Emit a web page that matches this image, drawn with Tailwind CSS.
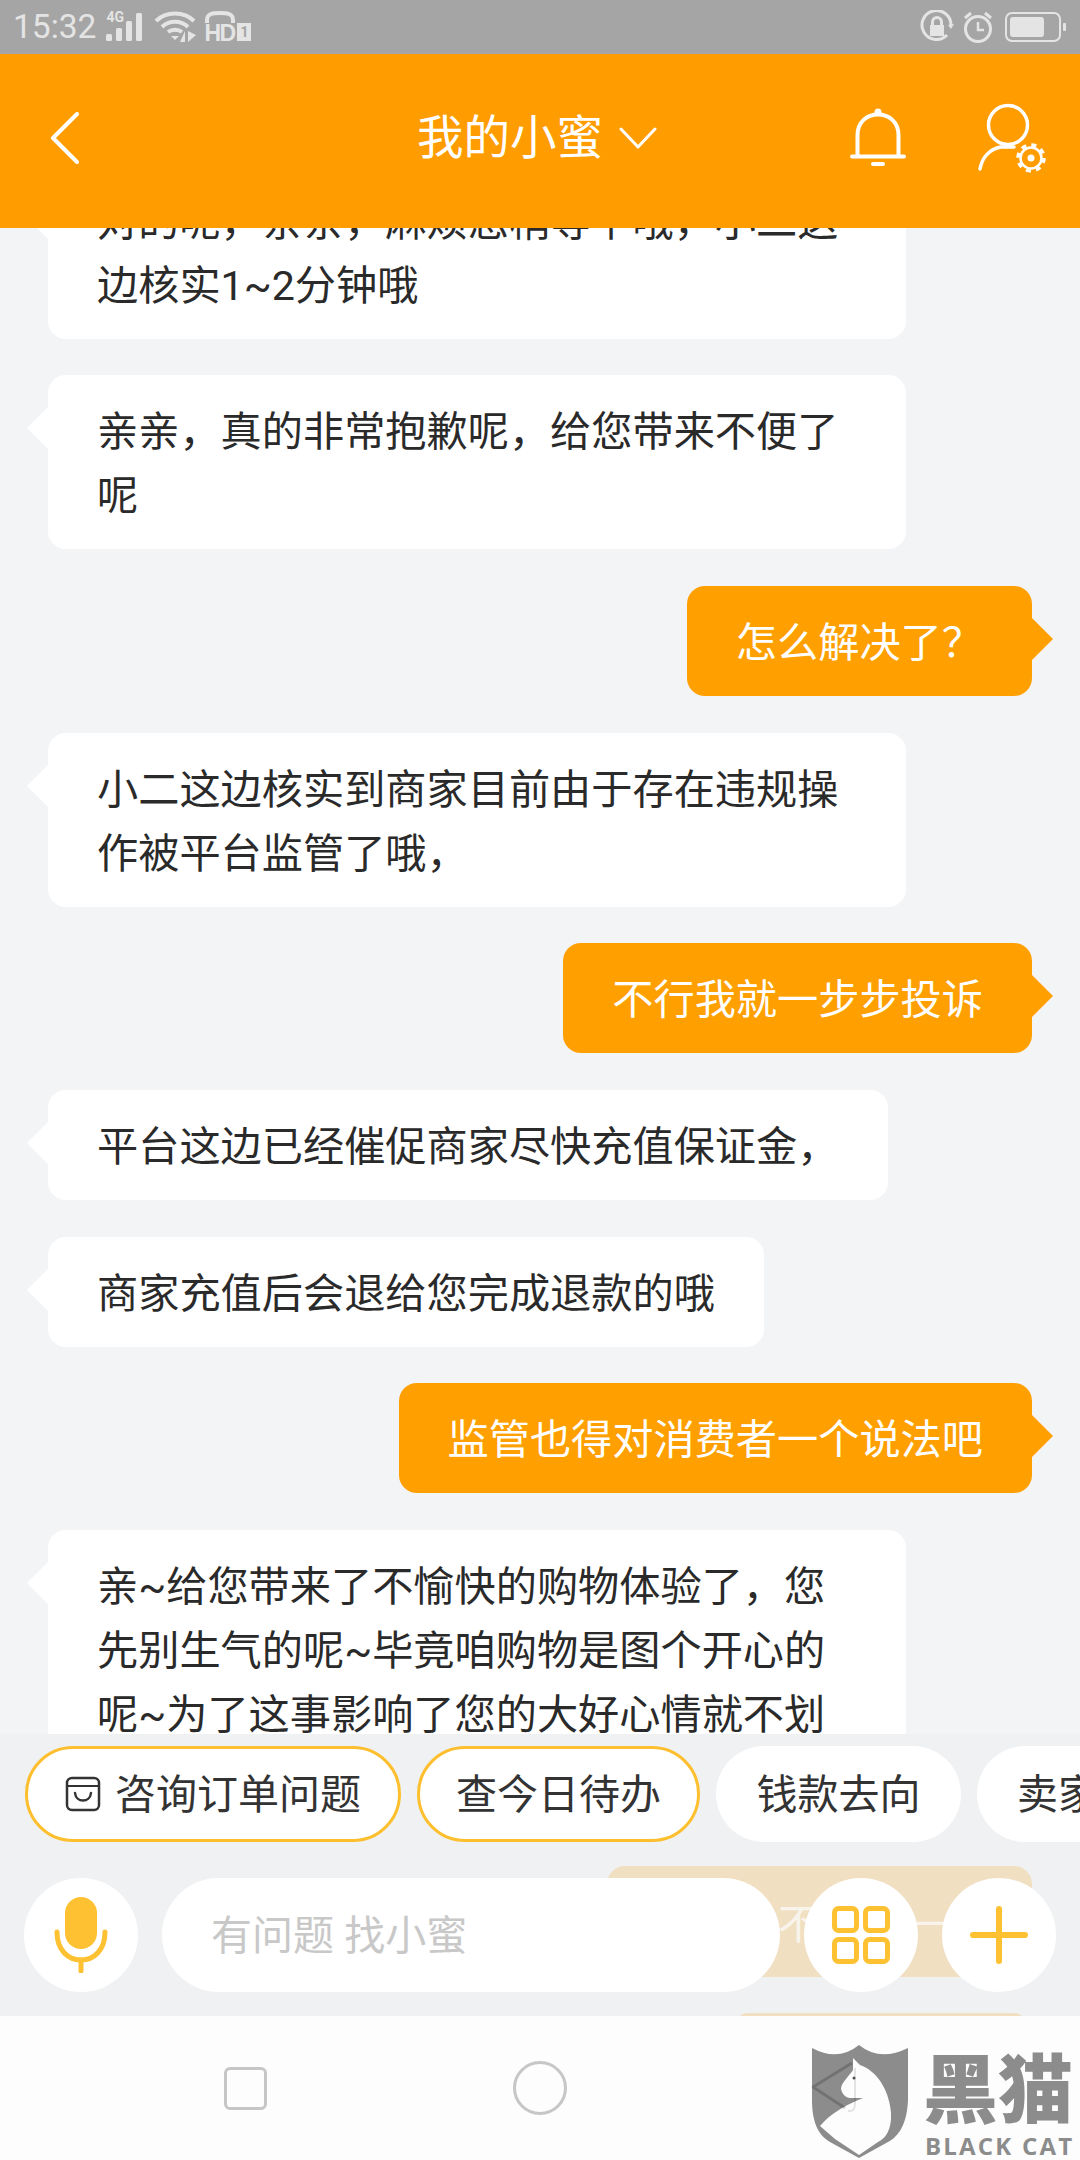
<!DOCTYPE html>
<html lang="zh-CN">
<head>
    <meta charset="UTF-8">
    <title>我的小蜜</title>
    <script src="https://cdn.jsdelivr.net/npm/@tailwindcss/browser@4"></script>
</head>
<body class="bg-[#f3f4f6]">
<div class="relative flex flex-col w-[1080px] h-[2160px] overflow-hidden bg-[#f3f4f6] [font-family:Roboto,'Noto_Sans_CJK_SC',sans-serif]">

    <!-- status bar -->
    <div class="relative z-20 flex items-center h-[54px] shrink-0 bg-[#a5a5a5] text-[#e4e4e4]">
        <span class="ml-[13px] text-[33.5px] leading-none">15:32</span>
        <div class="relative ml-[10px] w-[38px] h-[30px]">
            <span class="absolute left-0 top-[-2px] text-[14px] leading-none font-bold">4G</span>
            <svg class="absolute left-0 top-0" width="38" height="30" viewBox="0 0 38 30" fill="#e4e4e4">
                <rect x="0" y="22" width="6" height="7" rx="1.5"/>
                <rect x="10" y="16" width="6" height="13" rx="1.5"/>
                <rect x="20" y="9" width="6" height="20" rx="1.5"/>
                <rect x="30" y="1" width="6" height="28" rx="1.5"/>
            </svg>
        </div>
        <svg class="ml-[10px]" width="44" height="32" viewBox="0 0 44 32" fill="none" stroke="#e4e4e4" stroke-width="4">
            <path d="M2 10 C12 0 30 0 40 10"/>
            <path d="M8 16 C15 9 27 9 34 16"/>
            <path d="M14 21 C18 18 24 18 28 21"/>
            <path d="M17 25 L21 29 L25 25 Z" fill="#e4e4e4" stroke="none"/>
            <path d="M31 31 V20 L26 31 Z M34 20 V31 L42 24 Z" fill="#e4e4e4" stroke="none"/>
        </svg>
        <div class="relative ml-[6px] w-[48px] h-[32px]">
            <svg class="absolute left-0 top-0" width="32" height="14" viewBox="0 0 32 14" fill="none" stroke="#e4e4e4" stroke-width="4">
                <path d="M3 12 V9 C3 2 10 2 16 2 C22 2 29 2 29 9 V12"/>
            </svg>
            <span class="absolute left-0 top-[11px] text-[23px] leading-none font-bold [font-family:'Liberation_Sans',sans-serif] tracking-[-1.5px]">HD</span>
            <span class="absolute left-[33px] top-[12px] flex items-center justify-center w-[14px] h-[18px] bg-[#e4e4e4] text-[#a5a5a5] text-[14px] leading-none font-bold">1</span>
        </div>
        <svg class="ml-[668px]" width="34" height="34" viewBox="0 0 34 34" fill="none" stroke="#e4e4e4" stroke-width="3">
            <path d="M27 25 A14.5 14.5 0 1 1 31 15"/>
            <path d="M28 15 L31 19 L34 14 Z" fill="#e4e4e4" stroke="none"/>
            <rect x="10" y="15" width="14" height="11" fill="#e4e4e4" stroke="none"/>
            <path d="M12.5 15 V12 C12.5 6 21.5 6 21.5 12 V15"/>
        </svg>
        <svg class="ml-[8px]" width="32" height="34" viewBox="0 0 32 34" fill="none" stroke="#e4e4e4" stroke-width="3">
            <circle cx="16" cy="19" r="12.5"/>
            <path d="M16 12 V20 H22" stroke-width="2.5"/>
            <path d="M3 8 L9 3 M29 8 L23 3"/>
        </svg>
        <div class="ml-[11px] w-[56px] h-[30px] border-2 border-[#e4e4e4] rounded-[7px] p-[3px]">
            <div class="w-[34px] h-full bg-[#e4e4e4] rounded-[3px]"></div>
        </div>
        <div class="ml-[2px] w-[3px] h-[8px] bg-[#e4e4e4] rounded-[1px]"></div>
    </div>

    <!-- header -->
    <div class="relative z-20 flex items-center h-[174px] pb-[6px] shrink-0 bg-[#ff9c00] text-white">
        <svg class="ml-[50px]" width="29" height="52" viewBox="0 0 29 52" fill="none" stroke="#fff" stroke-width="4" stroke-linecap="round" stroke-linejoin="round">
            <path d="M27 2 L3 26 L27 50"/>
        </svg>
        <span class="ml-[338px] text-[46.5px] leading-none">我的小蜜</span>
        <svg class="ml-[16px]" width="38" height="22" viewBox="0 0 38 22" fill="none" stroke="#fff" stroke-width="3" stroke-linecap="round" stroke-linejoin="round">
            <path d="M2 2 L19 20 L36 2"/>
        </svg>
        <svg class="ml-[193px]" width="56" height="60" viewBox="0 0 56 60" fill="none" stroke="#fff" stroke-width="4" stroke-linecap="round">
            <circle cx="28" cy="4" r="3.5" fill="#fff" stroke="none"/>
            <path d="M7.5 48 V27 C7.5 14 17 6.5 28 6.5 C39 6.5 48.5 14 48.5 27 V48"/>
            <path d="M2 48.5 H54"/>
            <path d="M23 56 H33"/>
        </svg>
        <svg class="ml-[65px]" width="78" height="76" viewBox="0 0 78 76" fill="none" stroke="#fff" stroke-width="3.5" stroke-linecap="round">
            <circle cx="37" cy="25" r="19.5"/>
            <path d="M9 69 C11 58 18 49 30 47 H43"/>
            <circle cx="60" cy="58" r="10.5" stroke-width="2.5" fill="#ff9c00"/>
            <circle cx="60" cy="58" r="13" stroke-width="3.5" stroke-dasharray="5 5.2" stroke-linecap="butt"/>
            <circle cx="60" cy="58" r="3.5" fill="#fff" stroke="none"/>
        </svg>
    </div>

    <!-- chat list -->
    <div class="flex-1 min-h-0 overflow-hidden">
        <div class="flex flex-col gap-[36.7px] -mt-[63.5px] text-[41.2px] leading-[64px] text-[#2a2a2a]">
            <div class="relative w-fit max-w-[858px] ml-[48px] bg-white rounded-[18px] pl-[49px] pr-[50px] pt-[25px] pb-[21px]">
                对的呢，亲亲，麻烦您稍等下哦，小二这边核实1~2分钟哦
                <div class="absolute -left-[21px] top-[32px] w-0 h-0 border-y-[21px] border-y-transparent border-r-[21px] border-r-white"></div>
            </div>
            <div class="relative w-fit max-w-[858px] ml-[48px] bg-white rounded-[18px] pl-[49px] pr-[50px] pt-[25px] pb-[21px]">
                亲亲，真的非常抱歉呢，给您带来不便了呢
                <div class="absolute -left-[21px] top-[32px] w-0 h-0 border-y-[21px] border-y-transparent border-r-[21px] border-r-white"></div>
            </div>
            <div class="relative w-fit self-end mr-[48px] bg-[#ff9f00] text-white rounded-[18px] pl-[49px] pr-[49px] pt-[25px] pb-[21px]">
                怎么解决了？
                <div class="absolute -right-[21px] top-[32px] w-0 h-0 border-y-[21px] border-y-transparent border-l-[21px] border-l-[#ff9f00]"></div>
            </div>
            <div class="relative w-fit max-w-[858px] ml-[48px] bg-white rounded-[18px] pl-[49px] pr-[50px] pt-[25px] pb-[21px]">
                小二这边核实到商家目前由于存在违规操作被平台监管了哦，
                <div class="absolute -left-[21px] top-[32px] w-0 h-0 border-y-[21px] border-y-transparent border-r-[21px] border-r-white"></div>
            </div>
            <div class="relative w-fit self-end mr-[48px] bg-[#ff9f00] text-white rounded-[18px] pl-[49px] pr-[49px] pt-[25px] pb-[21px]">
                不行我就一步步投诉
                <div class="absolute -right-[21px] top-[32px] w-0 h-0 border-y-[21px] border-y-transparent border-l-[21px] border-l-[#ff9f00]"></div>
            </div>
            <div class="relative w-fit max-w-[858px] ml-[48px] bg-white rounded-[18px] pl-[49px] pr-[50px] pt-[25px] pb-[21px]">
                平台这边已经催促商家尽快充值保证金，
                <div class="absolute -left-[21px] top-[32px] w-0 h-0 border-y-[21px] border-y-transparent border-r-[21px] border-r-white"></div>
            </div>
            <div class="relative w-fit max-w-[858px] ml-[48px] bg-white rounded-[18px] pl-[49px] pr-[49px] pt-[25px] pb-[21px]">
                商家充值后会退给您完成退款的哦
                <div class="absolute -left-[21px] top-[32px] w-0 h-0 border-y-[21px] border-y-transparent border-r-[21px] border-r-white"></div>
            </div>
            <div class="relative w-fit self-end mr-[48px] bg-[#ff9f00] text-white rounded-[18px] pl-[49px] pr-[49px] pt-[25px] pb-[21px]">
                监管也得对消费者一个说法吧
                <div class="absolute -right-[21px] top-[32px] w-0 h-0 border-y-[21px] border-y-transparent border-l-[21px] border-l-[#ff9f00]"></div>
            </div>
            <div class="relative w-[858px] ml-[48px] bg-white rounded-[18px] pl-[49px] pr-[50px] pt-[25px] pb-[21px]">
                亲~给您带来了不愉快的购物体验了，您<br>先别生气的呢~毕竟咱购物是图个开心的<br>呢~为了这事影响了您的大好心情就不划
                <div class="absolute -left-[21px] top-[32px] w-0 h-0 border-y-[21px] border-y-transparent border-r-[21px] border-r-white"></div>
            </div>
        </div>
    </div>

    <!-- quick chips + input -->
    <div class="relative h-[282px] shrink-0 pt-[12px] bg-[#eff1f3] overflow-hidden">
        <!-- messages showing through behind the input row -->
        <div class="absolute left-[607px] top-[132px] w-[425px] h-[111px] bg-[#f1dfc2] rounded-[18px] text-[41px] leading-[118px] text-[#f8f4ec]">
            <span class="absolute left-[171px] top-0">不</span>
            <span class="absolute left-[300px] top-0">一</span>
        </div>
        <div class="absolute left-[737px] top-[279px] w-[288px] h-[12px] bg-[#f1dfc2] rounded-t-[10px]"></div>

        <div class="relative flex gap-[16px] pl-[25px] h-[96px] text-[41px] leading-none text-[#333]">
            <div class="flex items-center justify-center gap-[14px] shrink-0 w-[376px] bg-white border-[3px] border-[#fdbf2d] rounded-full">
                <svg width="36" height="36" viewBox="0 0 36 36" fill="none" stroke="#333" stroke-width="2.5" stroke-linecap="round">
                    <rect x="2" y="2" width="32" height="32" rx="5"/>
                    <path d="M2 10 H34" stroke-width="2"/>
                    <path d="M10 17 C11 27 25 27 26 17"/>
                </svg>
                <span class="pt-[3px]">咨询订单问题</span>
            </div>
            <div class="flex items-center justify-center shrink-0 w-[283px] pt-[3px] bg-white border-[3px] border-[#fdbf2d] rounded-full">查今日待办</div>
            <div class="flex items-center justify-center shrink-0 w-[245px] pt-[3px] bg-white rounded-full">钱款去向</div>
            <div class="flex items-center shrink-0 w-[300px] pl-[40px] pt-[3px] bg-white rounded-full">卖家</div>
        </div>

        <div class="relative flex gap-[24px] pl-[24px] mt-[36px]">
            <div class="flex items-center justify-center w-[114px] h-[114px] bg-white rounded-full">
                <svg width="54" height="76" viewBox="0 0 54 76" fill="none" stroke="#fdc131" stroke-width="5" stroke-linecap="round">
                    <rect x="11" y="0" width="32" height="52" rx="16" fill="#fdc131" stroke="none"/>
                    <path d="M3 35 C3 53 14 63 27 63 C40 63 51 53 51 35"/>
                    <path d="M27 63 V74"/>
                </svg>
            </div>
            <div class="flex items-center w-[618px] h-[114px] pl-[49px] pt-[2px] bg-white rounded-full text-[41px] leading-none text-[#c8c8c8]">有问题 找小蜜</div>
            <div class="flex items-center justify-center w-[114px] h-[114px] bg-white rounded-full">
                <svg width="58" height="58" viewBox="0 0 58 58" fill="none" stroke="#fdc131" stroke-width="5">
                    <rect x="2.5" y="2.5" width="22" height="22" rx="4"/>
                    <rect x="33.5" y="2.5" width="22" height="22" rx="4"/>
                    <rect x="2.5" y="33.5" width="22" height="22" rx="4"/>
                    <rect x="33.5" y="33.5" width="22" height="22" rx="4"/>
                </svg>
            </div>
            <div class="flex items-center justify-center w-[114px] h-[114px] bg-white rounded-full">
                <svg width="58" height="58" viewBox="0 0 58 58" fill="none" stroke="#fdc131" stroke-width="6" stroke-linecap="round">
                    <path d="M29 3 V55 M3 29 H55"/>
                </svg>
            </div>
        </div>
    </div>

    <!-- system nav -->
    <div class="flex items-center h-[144px] shrink-0 pl-[224px] bg-[#fdfdfd]">
        <div class="w-[43px] h-[43px] border-[3px] border-[#c6c6c6] rounded-[6px]"></div>
        <div class="ml-[246px] w-[54px] h-[54px] border-[3px] border-[#c6c6c6] rounded-full"></div>
    </div>

    <!-- watermark -->
    <div class="absolute left-[780px] top-[2020px] w-[300px] h-[140px] z-30">
        <svg class="absolute left-0 top-0" width="150" height="140" viewBox="0 0 150 140">
            <path d="M32 28 Q58 42 79 25 Q100 42 128 28 V80 C127 105 118 117 108 122 L79 138 L50 122 C40 116 32 105 32 80 Z" fill="#8c8c8c"/>
            <path d="M73 38 L80 45 C100 52 110 75 111 93 C112 110 105 119 98 122 L79 135 L55 119 L40 106 C50 94 65 85 83 78 L70 78 C65 78 61 72 61 68 C62 62 70 55 73 50 Z" fill="#fdfdfd"/>
            <circle cx="74" cy="58" r="1.5" fill="#555"/>
            <path d="M72 43 L33 67 L65 88" fill="none" stroke="#000" stroke-opacity="0.18" stroke-width="3" stroke-linejoin="round"/>
            <path d="M75 48 V84 Q75 92 68 91" fill="none" stroke="#000" stroke-opacity="0.1" stroke-width="2"/>
        </svg>
        <span class="absolute left-[143px] top-[34px] text-[75px] leading-none font-black text-[#8c8c8c] whitespace-nowrap">黑猫</span>
        <span class="absolute left-[145px] top-[114px] text-[24px] leading-none font-bold text-[#8c8c8c] whitespace-nowrap tracking-[2.2px] [font-family:'Open_Sans',sans-serif]">BLACK CAT</span>
    </div>
</div>
</body>
</html>
